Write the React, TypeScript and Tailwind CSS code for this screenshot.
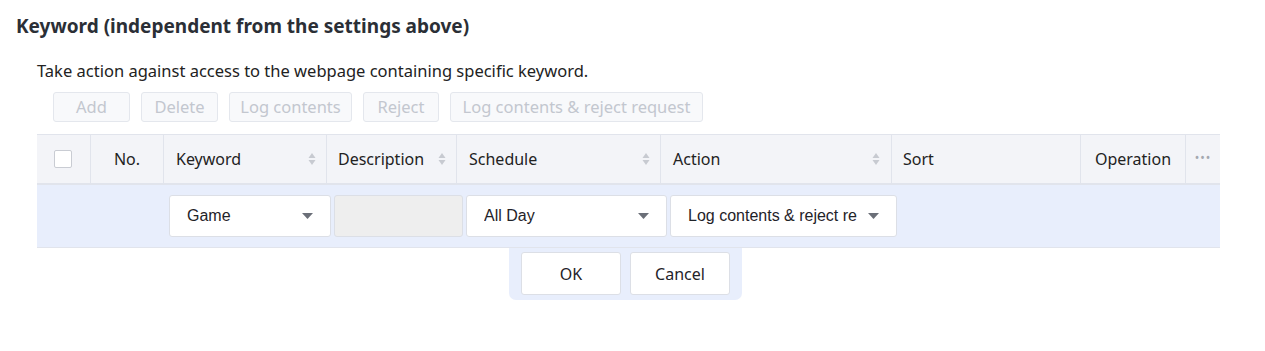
const ui = { fontFamily: '"Noto Sans", "Liberation Sans", sans-serif' };
const arial = { fontFamily: '"Liberation Sans", Arial, sans-serif' };

function SortIcon() {
  return (
    <svg width="8" height="14" viewBox="0 0 8 14" className="shrink-0">
      <path d="M4 1 L7.5 6 H0.5 Z" fill="#c7cad1" />
      <path d="M4 13 L7.5 8 H0.5 Z" fill="#c7cad1" />
    </svg>
  );
}

function Caret() {
  return (
    <svg width="11" height="6" viewBox="0 0 11 6" className="shrink-0">
      <path d="M0 0 H11 L5.5 6 Z" fill="#6b6f78" />
    </svg>
  );
}

function Select({ value, w }: { value: string; w: string }) {
  return (
    <div
      className={`flex h-[42px] ${w} items-center justify-between rounded-[3px] border border-[#dcdfe6] bg-white pl-[17px] pr-[17px] text-[16px] text-[#1f2329]`}
      style={arial}
    >
      <span className="overflow-hidden whitespace-nowrap">{value}</span>
      <span className="pl-2"><Caret /></span>
    </div>
  );
}

const tools = [
  { t: "Add", w: "w-[77px]" },
  { t: "Delete", w: "w-[77px]" },
  { t: "Log contents", w: "w-[123px]" },
  { t: "Reject", w: "w-[76px]" },
  { t: "Log contents & reject request", w: "w-[253px]" },
];

export default function App() {
  return (
    <div className="h-[351px] w-[1265px] bg-white text-[#333]" style={ui}>
      <h2 className="pl-4 pt-[14px] text-[19px] font-bold leading-6 text-[#2b2f36]">
        Keyword (independent from the settings above)
      </h2>
      <div className="pl-[37px] pr-[45px]">
        <p className="mt-[23px] text-[16.5px] leading-5 text-[#222]">
          Take action against access to the webpage containing specific keyword.
        </p>
        <div className="mt-[11px] flex gap-[11px] pl-4">
          {tools.map(({ t, w }) => (
            <button
              key={t}
              className={`h-[30px] ${w} whitespace-nowrap rounded-[3px] border border-[#e4e7ed] bg-[#f8f9fb] text-[16.5px] text-[#c3c7cf]`}
            >
              {t}
            </button>
          ))}
        </div>
        <div className="mt-[12px] w-[1183px]">
          <div className="flex h-[51px] border-y border-[#e1e4ec] border-b-2 bg-[#f3f4f8] text-[16px] text-[#222]">
            <div className="flex w-[54px] items-center justify-center border-r border-[#e1e4ec] pr-px">
              <span className="h-[18px] w-[18px] rounded-[2px] border border-[#c9ccd3] bg-white" />
            </div>
            <div className="flex w-[73px] items-center justify-center border-r border-[#e1e4ec]">No.</div>
            <div className="flex w-[163px] items-center justify-between border-r border-[#e1e4ec] pl-[12px] pr-[10px]">
              <span>Keyword</span>
              <SortIcon />
            </div>
            <div className="flex w-[130px] items-center justify-between border-r border-[#e1e4ec] pl-[11px] pr-[10px]">
              <span>Description</span>
              <SortIcon />
            </div>
            <div className="flex w-[204px] items-center justify-between border-r border-[#e1e4ec] pl-[12px] pr-[10px]">
              <span>Schedule</span>
              <SortIcon />
            </div>
            <div className="flex w-[231px] items-center justify-between border-r border-[#e1e4ec] pl-[12px] pr-[11px]">
              <span>Action</span>
              <SortIcon />
            </div>
            <div className="flex w-[189px] items-center border-r border-[#e1e4ec] pl-[11px]">Sort</div>
            <div className="flex w-[105px] items-center justify-center border-r border-[#e1e4ec]">Operation</div>
            <div className="flex flex-1 items-center justify-center pb-[2px] text-[12px] tracking-[1px] text-[#a4a8b0]">
              •••
            </div>
          </div>
          <div className="flex h-[63px] items-center border-b border-[#e1e4ec] bg-[#e8eefc] pl-[132px]">
            <div className="flex gap-[3px]">
              <Select value="Game" w="w-[162px]" />
              <div className="h-[42px] w-[129px] rounded-[3px] border border-[#dcdfe6] bg-[#eeeeee]" />
              <Select value="All Day" w="w-[201px]" />
              <Select value="Log contents & reject re" w="w-[227px]" />
            </div>
          </div>
          <div className="ml-[472px] flex w-[233px] gap-[9px] rounded-b-[7px] bg-[#e8eefc] px-[12px] pb-[5px] pt-[4px]">
            <button className="h-[43px] w-[101px] rounded-[3px] border border-[#dcdfe6] bg-white text-[16px] text-[#1f2329]">
              OK
            </button>
            <button className="h-[43px] w-[101px] rounded-[3px] border border-[#dcdfe6] bg-white text-[16px] text-[#1f2329]">
              Cancel
            </button>
          </div>
        </div>
      </div>
    </div>
  );
}
